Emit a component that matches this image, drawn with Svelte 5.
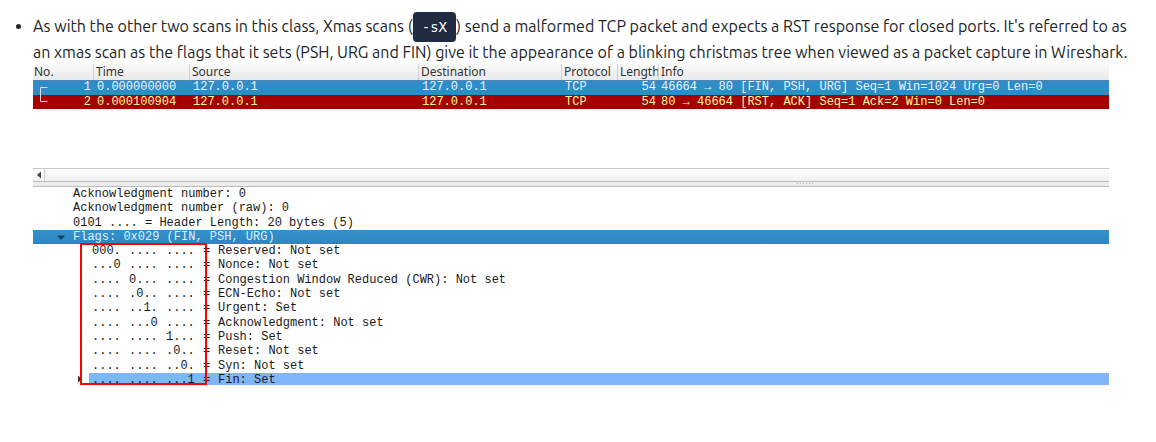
<script>
  const packets = [
    { no: 1, time: '0.000000000', src: '127.0.0.1', dst: '127.0.0.1', proto: 'TCP', len: 54, info: '46664 → 80 [FIN, PSH, URG] Seq=1 Win=1024 Urg=0 Len=0', kind: 'selected' },
    { no: 2, time: '0.000100904', src: '127.0.0.1', dst: '127.0.0.1', proto: 'TCP', len: 54, info: '80 → 46664 [RST, ACK] Seq=1 Ack=2 Win=0 Len=0', kind: 'reset' }
  ];
  const fields = [
    'Acknowledgment number: 0',
    'Acknowledgment number (raw): 0',
    '0101 .... = Header Length: 20 bytes (5)'
  ];
  const flags = [
    ['000. .... ....', 'Reserved: Not set'],
    ['...0 .... ....', 'Nonce: Not set'],
    ['.... 0... ....', 'Congestion Window Reduced (CWR): Not set'],
    ['.... .0.. ....', 'ECN-Echo: Not set'],
    ['.... ..1. ....', 'Urgent: Set'],
    ['.... ...0 ....', 'Acknowledgment: Not set'],
    ['.... .... 1...', 'Push: Set'],
    ['.... .... .0..', 'Reset: Not set'],
    ['.... .... ..0.', 'Syn: Not set'],
    ['.... .... ...1', 'Fin: Set']
  ];
</script>

<ul class="notes">
  <li>
    <p>As with the other two scans in this class, Xmas scans (<code>-sX</code>) send a malformed TCP packet and expects a RST response for closed ports. It's referred to as<br />an xmas scan as the flags that it sets (PSH, URG and FIN) give it the appearance of a blinking christmas tree when viewed as a packet capture in Wireshark.</p>

    <div class="capture">
      <table>
        <colgroup>
          <col class="c-no" /><col class="c-time" /><col class="c-src" /><col class="c-dst" /><col class="c-proto" /><col class="c-len" /><col />
        </colgroup>
        <thead>
          <tr><th>No.</th><th>Time</th><th>Source</th><th>Destination</th><th>Protocol</th><th>Length</th><th>Info</th></tr>
        </thead>
        <tbody>
          {#each packets as p}
            <tr class={p.kind}>
              <td>
                <div class="no">
                  <svg width="9" height="15" viewBox="0 0 9 15" aria-hidden="true">
                    <path d={p.no === 1 ? 'M8.500 7.500H1.500V15' : 'M1.500 0V6.500H8.500'} fill="none" stroke="#d5dde2" />
                  </svg>
                  <span>{p.no}</span>
                </div>
              </td>
              <td>{p.time}</td><td>{p.src}</td><td>{p.dst}</td><td>{p.proto}</td><td class="len">{p.len}</td><td>{p.info}</td>
            </tr>
          {/each}
        </tbody>
      </table>

      <div class="scroll">
        <button aria-label="Scroll left">
          <svg width="4" height="8" viewBox="0 0 4 8"><path d="M4 0.500V7.500L0 4Z" fill="#444" /></svg>
        </button>
      </div>
      <div class="splitter"><i></i><i></i><i></i><i></i><i></i><i></i></div>

      <div class="details">
        <div class="fields">
          {#each fields as f}<div>{f}</div>{/each}
        </div>
        <div class="group">
          <svg width="8" height="5" viewBox="0 0 8 5" aria-hidden="true"><path d="M0 0.500H8L4 5Z" fill="#163f5c" /></svg>
          <span>Flags: 0x029 (FIN, PSH, URG)</span>
        </div>
        <div class="flags">
          {#each flags as [bits, label], i}
            <div class="flag" class:current={i === flags.length - 1}>
              {#each bits.split(' ') as nibble}<span>{nibble}</span>{/each}
              <span>=</span><span>{label}</span>
            </div>
          {/each}
          <svg class="more" width="4" height="8" viewBox="0 0 4 8" aria-hidden="true"><path d="M0 0.500V7.500L4 4Z" fill="#333" /></svg>
          <div class="marker"></div>
        </div>
      </div>
    </div>
  </li>
</ul>

<style>
  :global(body) {
    background: #fff;
    color: #212529;
    font: 16px/26px Ubuntu, "Noto Sans", sans-serif;
  }
  .notes {
    margin: 0;
    padding: 13px 8px 56px 33px;
  }
  p {
    margin: 0;
  }
  code {
    padding: 7px 9px;
    border-radius: 4px;
    background: #212c42;
    color: #fff;
    font: 14px "DejaVu Sans Mono", monospace;
  }
  .capture {
    margin: -1px 39px 0 0;
    font: 12px/14px "Liberation Mono", monospace;
    color: #1a1a1a;
    white-space: nowrap;
  }
  table {
    width: 100%;
    table-layout: fixed;
    border-collapse: collapse;
  }
  .c-no { width: 60px; }
  .c-time { width: 96px; }
  .c-src { width: 229px; }
  .c-dst { width: 143px; }
  .c-proto { width: 56px; }
  .c-len { width: 41px; }
  th {
    height: 15px;
    padding: 0 0 1px 3px;
    overflow: hidden;
    background: linear-gradient(#fafafa, #e9e9e9);
    box-shadow: inset 1px 0 #d0d0d0;
    font: 12px/15px "Noto Sans", sans-serif;
    color: #333;
    text-align: left;
  }
  th:first-child {
    padding-left: 1px;
    box-shadow: none;
  }
  td {
    padding: 0 0 0 4px;
    line-height: 15px;
  }
  td:first-child {
    padding: 0 2px 0 6px;
  }
  td.len {
    padding: 0 2px 0 0;
    text-align: right;
  }
  td:last-child {
    padding-left: 3px;
  }
  .reset td {
    height: 14px;
  }
  .selected {
    background: #308cc6;
    color: #e8f4fb;
    box-shadow: inset 0 1px #4b87b2;
  }
  .reset {
    background: #a40000;
    color: #fffc9c;
  }
  .reset td {
    line-height: 14px;
  }
  .no {
    display: flex;
    justify-content: space-between;
    height: 15px;
  }
  .reset .no {
    height: 14px;
  }
  .scroll {
    display: flex;
    height: 12px;
    margin-top: 59px;
    border-top: 1px solid #c8c8c8;
    border-bottom: 1px solid #bbb;
    background: linear-gradient(#fff, #f0f0f0);
  }
  .scroll button {
    display: grid;
    place-items: center;
    width: 12px;
    padding: 0;
    border: 0;
    border-right: 1px solid #c8c8c8;
    background: none;
  }
  .splitter {
    display: flex;
    justify-content: center;
    gap: 2px;
    height: 3px;
    padding: 1px 0 0 468px;
    border-bottom: 1px solid #bbb;
    background: #ececec;
  }
  .splitter i {
    width: 1px;
    height: 1px;
    background: #bbb;
  }
  .fields {
    display: grid;
    height: 43px;
    padding-left: 40px;
  }
  .group {
    display: flex;
    align-items: center;
    gap: 8px;
    height: 14px;
    padding-left: 24px;
    background: linear-gradient(#3591cc, #2c86c0);
    color: #dff0fa;
  }
  .flags {
    position: relative;
    display: grid;
    grid-template-rows: repeat(9, 1fr) 12px;
    height: 141px;
    padding-left: 56px;
  }
  .flag {
    display: grid;
    grid-template-columns: 37px 37px 37px 15px 1fr;
    padding-left: 3px;
  }
  .current {
    background: #80b5f7;
  }
  .more {
    position: absolute;
    left: 45px;
    bottom: 2px;
  }
  .marker {
    position: absolute;
    inset: -1px auto 0 47px;
    width: 123px;
    border: 2px solid #f00;
  }
</style>
